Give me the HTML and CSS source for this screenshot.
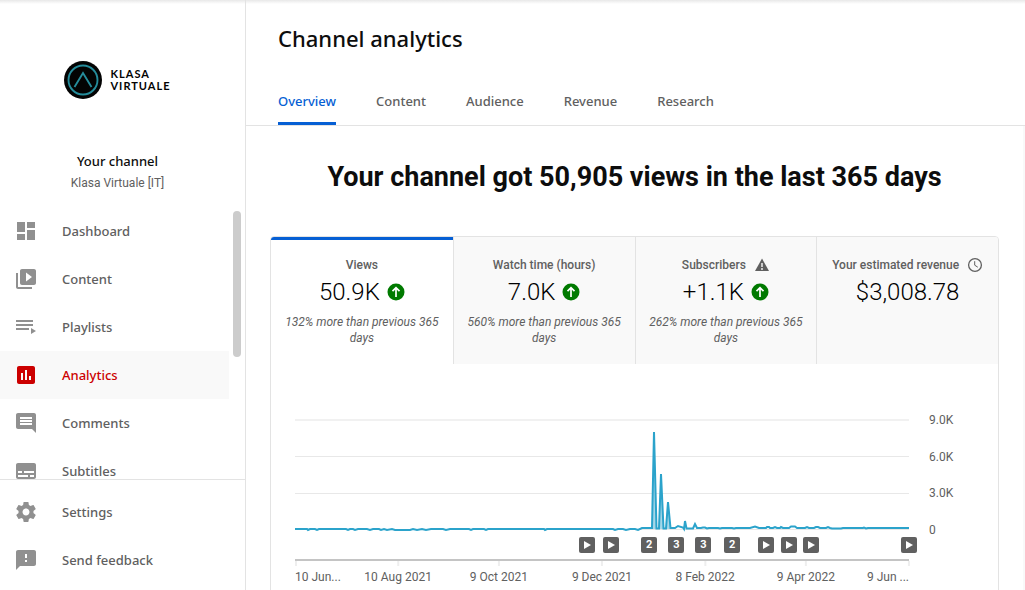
FILE: index.html
```html
<!DOCTYPE html>
<html lang="en">
<head>
<meta charset="utf-8">
<title>Channel analytics</title>
<link rel="stylesheet" href="styles.css">
</head>
<body>
<div class="app">
  <aside class="sidebar">
    <div class="profile">
      <div class="logo">
        <svg class="logo-mark" viewBox="0 0 38 38" aria-hidden="true"><circle cx="19" cy="19" r="19" fill="#030303"/><circle cx="19" cy="19" r="14.500" fill="none" stroke="#258c9b" stroke-width="1.900"/><path d="M10.500 26 19 12l8.500 14" fill="none" stroke="#258c9b" stroke-width="1.900"/></svg>
        <div class="logo-text">KLASA<br>VIRTUALE</div>
      </div>
      <div class="profile-title">Your channel</div>
      <div class="profile-name">Klasa Virtuale [IT]</div>
    </div>
    <nav class="nav-main">
      <a class="nav-item" href="#"><svg class="icon" viewBox="0 0 24 24"><path d="M3 13h8V3H3v10zm0 8h8v-6H3v6zm10 0h8V11h-8v10zm0-18v6h8V3h-8z"/></svg>Dashboard</a>
      <a class="nav-item" href="#"><svg class="icon" viewBox="0 0 24 24"><path d="M4 6H2v14c0 1.100.9 2 2 2h14v-2H4V6zm16-4H8c-1.100 0-2 .9-2 2v12c0 1.100.9 2 2 2h12c1.100 0 2-.9 2-2V4c0-1.100-.9-2-2-2zm-8 12.500v-9l6 4.500-6 4.500z"/></svg>Content</a>
      <a class="nav-item" href="#"><svg class="icon" viewBox="0 0 24 24"><path d="M2 5h17v2H2zM2 9h17v2H2zM2 13h13v2H2zM17 13l5 3-5 3z"/></svg>Playlists</a>
      <a class="nav-item active" href="#" aria-current="page"><svg class="icon" viewBox="0 0 24 24"><path d="M19 3H5c-1.100 0-2 .9-2 2v14c0 1.100.9 2 2 2h14c1.100 0 2-.9 2-2V5c0-1.100-.9-2-2-2zM9 17H7v-7h2v7zm4 0h-2V7h2v10zm4 0h-2v-4h2v4z"/></svg>Analytics</a>
      <a class="nav-item" href="#"><svg class="icon" viewBox="0 0 24 24"><path d="M21.990 4c0-1.100-.89-2-1.990-2H4c-1.100 0-2 .9-2 2v12c0 1.100.9 2 2 2h14l4 4-.01-18zM18 14H6v-2h12v2zm0-3H6V9h12v2zm0-3H6V6h12v2z"/></svg>Comments</a>
      <a class="nav-item" href="#"><svg class="icon" viewBox="0 0 24 24"><path d="M20 4H4c-1.100 0-2 .9-2 2v12c0 1.100.9 2 2 2h16c1.100 0 2-.9 2-2V6c0-1.100-.9-2-2-2zM4 12h4v2H4v-2zm10 6H4v-2h10v2zm6 0h-4v-2h4v2zm0-4H10v-2h10v2z"/></svg>Subtitles</a>
      <span class="scroll-thumb"></span>
    </nav>
    <nav class="nav-footer">
      <a class="nav-item" href="#"><svg class="icon" viewBox="0 0 24 24"><path d="M19.430 12.980c.04-.32.07-.64.07-.98s-.03-.66-.07-.98l2.110-1.650c.19-.15.24-.42.12-.64l-2-3.460c-.12-.22-.39-.3-.61-.22l-2.490 1c-.52-.4-1.080-.73-1.690-.98l-.38-2.650C14.460 2.180 14.250 2 14 2h-4c-.25 0-.46.18-.49.42l-.38 2.650c-.61.25-1.170.59-1.690.98l-2.490-1c-.23-.09-.49 0-.61.22l-2 3.460c-.13.22-.07.49.12.64l2.110 1.650c-.04.32-.07.65-.07.98s.03.66.07.98l-2.110 1.650c-.19.15-.24.42-.12.64l2 3.460c.12.22.39.3.61.22l2.490-1c.52.4 1.080.73 1.690.98l.38 2.650c.03.24.24.42.49.42h4c.25 0 .46-.18.49-.42l.38-2.650c.61-.25 1.170-.59 1.690-.98l2.490 1c.23.09.49 0 .61-.22l2-3.460c.12-.22.07-.49-.12-.64l-2.110-1.650zM12 15.500c-1.930 0-3.500-1.570-3.500-3.500s1.570-3.500 3.500-3.500 3.500 1.570 3.500 3.500-1.570 3.500-3.500 3.500z"/></svg>Settings</a>
      <a class="nav-item" href="#"><svg class="icon" viewBox="0 0 24 24"><path d="M20 2H4c-1.100 0-1.990.9-1.990 2L2 22l4-4h14c1.100 0 2-.9 2-2V4c0-1.100-.9-2-2-2zm-7 12h-2v-2h2v2zm0-4h-2V6h2v4z"/></svg>Send feedback</a>
    </nav>
  </aside>
  <main class="main">
    <header class="header">
      <h1 class="title">Channel analytics</h1>
      <nav class="tabs">
        <a class="tab selected" href="#" aria-current="page">Overview</a>
        <a class="tab" href="#">Content</a>
        <a class="tab" href="#">Audience</a>
        <a class="tab" href="#">Revenue</a>
        <a class="tab" href="#">Research</a>
      </nav>
    </header>
    <section class="content">
      <h2 class="headline">Your channel got 50,905 views in the last 365 days</h2>
      <div class="card">
        <div class="metrics">
          <button class="metric chosen" type="button">
            <span class="metric-label">Views</span>
            <span class="metric-value">50.9K <svg class="up" viewBox="0 0 18 18"><circle cx="9" cy="9" r="8.500" fill="#007a00"/><path d="M9 14V5M5.500 8.200 9 4.700l3.500 3.500" fill="none" stroke="#fff" stroke-width="1.700"/></svg></span>
            <span class="metric-note">132% more than previous 365 days</span>
          </button>
          <button class="metric" type="button">
            <span class="metric-label">Watch time (hours)</span>
            <span class="metric-value">7.0K <svg class="up" viewBox="0 0 18 18"><circle cx="9" cy="9" r="8.500" fill="#007a00"/><path d="M9 14V5M5.500 8.200 9 4.700l3.500 3.500" fill="none" stroke="#fff" stroke-width="1.700"/></svg></span>
            <span class="metric-note">560% more than previous 365 days</span>
          </button>
          <button class="metric" type="button">
            <span class="metric-label">Subscribers <svg class="hint" viewBox="0 0 16 16"><path fill="#606060" d="M8 1.500 15 14H1z"/><path d="M8 6v4M8 11v2" stroke="#f9f9f9" stroke-width="1.400"/></svg></span>
            <span class="metric-value">+1.1K <svg class="up" viewBox="0 0 18 18"><circle cx="9" cy="9" r="8.500" fill="#007a00"/><path d="M9 14V5M5.500 8.200 9 4.700l3.500 3.500" fill="none" stroke="#fff" stroke-width="1.700"/></svg></span>
            <span class="metric-note">262% more than previous 365 days</span>
          </button>
          <button class="metric" type="button">
            <span class="metric-label">Your estimated revenue <svg class="hint" viewBox="0 0 16 16" fill="none" stroke="#606060"><circle cx="8" cy="8" r="6.400" stroke-width="1.300"/><path d="M7.700 4.200V8.200L10.800 10.200"/></svg></span>
            <span class="metric-value">$3,008.78</span>
          </button>
        </div>
        <div class="chart">
          <div class="plot">
            <svg class="lines" viewBox="0 0 614 120" preserveAspectRatio="none" aria-label="Views per day">
              <path class="grid-top" d="M0 10H614"/>
              <path class="grid" d="M0 46.500H614M0 83.500H614"/>
              <path class="grid" d="M0 119.500H614"/>
              <path class="area" d="M357 119 359 22 361.500 119ZM363.500 119 366 64 369 119ZM371 119 373 92 376 119Z"/>
              <path class="series" d="M0 119H12L13 120 15 119H20L22 120 24 119H51L53 120 55 119H58L60 120 63 119H72L75 120 78 119H84L86 120 89 119 92 120 97 119 100 120H115L118 119 122 120 127 119 131 120 136 119H148L151 120 155 119H174L176 120 178 119H189L191 120 193 119H249L250 120 252 119H318L320 120 323 119H328L331 120 335 119H340L343 120 347 118H357L359 22 361.500 118.500H364L366 64 368.500 118.500H371L373 92 375.500 118H380L383 116 388 117.500 389 119 390 111 391.500 118.500H398L400 114 402 118H406L408 117.500H410L412 118.500 414 118H423L425 118.500 427 118H437L439 118.500 441 118H455L460 116.500 464 118H471L472 117H474L475 118H478L480 117 482 118H485L486 117 488 118H494L496 116.500H500L502 118H510L512 117 514 118H519L521 117H523L525 118H531L533 117 535 118 537 118.500H546L548 118H568L569 117.500 571 118.500 573 118H614"/>
            </svg>
            <div class="markers">
              <span class="marker" style="left:47.500%"><svg viewBox="0 0 16 16"><path d="M5 4l7 4-7 4z" fill="#fff"/></svg></span>
              <span class="marker" style="left:51.400%"><svg viewBox="0 0 16 16"><path d="M5 4l7 4-7 4z" fill="#fff"/></svg></span>
              <span class="marker" style="left:57.700%">2</span>
              <span class="marker" style="left:62.100%">3</span>
              <span class="marker" style="left:66.500%">3</span>
              <span class="marker" style="left:71.200%">2</span>
              <span class="marker" style="left:76.700%"><svg viewBox="0 0 16 16"><path d="M5 4l7 4-7 4z" fill="#fff"/></svg></span>
              <span class="marker" style="left:80.500%"><svg viewBox="0 0 16 16"><path d="M5 4l7 4-7 4z" fill="#fff"/></svg></span>
              <span class="marker" style="left:84.100%"><svg viewBox="0 0 16 16"><path d="M5 4l7 4-7 4z" fill="#fff"/></svg></span>
              <span class="marker" style="left:100%"><svg viewBox="0 0 16 16"><path d="M5 4l7 4-7 4z" fill="#fff"/></svg></span>
            </div>
            <div class="x-axis">
              <span class="tick first" style="left:0%">10 Jun...</span>
              <span class="tick" style="left:16.800%">10 Aug 2021</span>
              <span class="tick" style="left:33.200%">9 Oct 2021</span>
              <span class="tick" style="left:50%">9 Dec 2021</span>
              <span class="tick" style="left:66.800%">8 Feb 2022</span>
              <span class="tick" style="left:83.200%">9 Apr 2022</span>
              <span class="tick last" style="left:100%">9 Jun ...</span>
            </div>
          </div>
          <div class="y-axis"><span>9.0K</span><span>6.0K</span><span>3.0K</span><span>0</span></div>
        </div>
      </div>
    </section>
  </main>
</div>
</body>
</html>
```
FILE: styles.css
```css
* { box-sizing: border-box; }
body { margin: 0; background: #fff; color: #0d0d0d; font-family: Roboto, "Liberation Sans", sans-serif; }
a { color: inherit; text-decoration: none; }
.app { display: flex; height: 100vh; overflow: hidden; background: linear-gradient(#e8e8e8, #fff) top / 100% 4px no-repeat; }

.sidebar { display: flex; flex-direction: column; flex: none; width: 246px; border-right: 1px solid #e3e3e3; }
.profile { display: flex; flex-direction: column; align-items: center; flex: none; height: 207px; padding: 61px 10px 0 0; }
.logo { display: flex; align-items: center; gap: 8px; height: 38px; margin-bottom: 52px; }
.logo-mark { width: 38px; height: 38px; }
.logo-text { font: 700 11px/12px Lato, sans-serif; letter-spacing: 1px; color: #030303; }
.profile-title { font: 500 13px/20px "Noto Sans", sans-serif; }
.profile-name { margin-top: 4px; font-size: 12px; line-height: 16px; color: #606060; }
.nav-main { position: relative; flex: 1; min-height: 0; overflow: hidden; padding-right: 16px; }
.nav-item { display: flex; align-items: center; gap: 24px; height: 48px; padding-left: 14px; font: 500 13px/20px "Noto Sans", sans-serif; color: #606060; }
.nav-item.active { background: #f9f9f9; color: #c00; }
.icon { width: 24px; height: 24px; fill: #909090; }
.active .icon { fill: #c00; }
.scroll-thumb { position: absolute; top: 4px; right: 4px; width: 8px; height: 146px; border-radius: 4px; background: #ccc; }
.nav-footer { flex: none; padding: 8px 0 6px; border-top: 1px solid #e3e3e3; }

.main { flex: 1; min-width: 0; }
.header { padding: 21px 32px 0; border-bottom: 1px solid #e3e3e3; }
.title { margin: 0; font: 500 22px/34px "Noto Sans", sans-serif; }
.tabs { display: flex; gap: 40px; margin-top: 22px; }
.tab { height: 48px; font: 500 13px/48px "Noto Sans", sans-serif; color: #606060; }
.tab.selected { color: #065fd4; box-shadow: inset 0 -3px #065fd4; }
.content { min-height: 100%; padding: 34px 24px 0; border-right: 2px solid #f9f9f9; }
.headline { margin: 0; font-size: 27px; font-weight: 700; line-height: 34px; text-align: center; }
.card { margin-top: 42px; border: 1px solid #e3e3e3; border-radius: 4px; height: 600px; overflow: hidden; }
.metrics { display: grid; grid-template-columns: repeat(4, 1fr); }
.metric { display: flex; flex-direction: column; align-items: center; height: 127px; padding: 20px 10px 0; border: 0; border-left: 1px solid #e3e3e3; background: #f9f9f9; font-family: inherit; color: #0d0d0d; }
.metric.chosen { border-left: 0; background: #fff; box-shadow: inset 0 3px #065fd4; }
.metric-label { display: flex; align-items: center; gap: 8px; height: 16px; font-size: 12px; font-weight: 500; line-height: 16px; color: #606060; white-space: nowrap; }
.hint { width: 16px; height: 16px; }
.metric-value { display: flex; align-items: center; gap: 7px; margin-top: 3px; font-size: 24px; font-weight: 300; line-height: 32px; color: #000; }
.up { width: 18px; height: 18px; }
.metric-note { margin-top: 6px; font-size: 12px; font-style: italic; line-height: 16px; color: #606060; }

.chart { display: flex; gap: 20px; padding: 46px 24px 0; }
.plot { flex: 1; min-width: 0; }
.lines { display: block; width: 100%; height: 120px; overflow: visible; }
.lines path { fill: none; vector-effect: non-scaling-stroke; }
.lines .grid-top { stroke: #f1f1f1; stroke-width: 2; }
.lines .grid { stroke: #e8e8e8; }
.lines .area { fill: #a5d7e8; }
.lines .series { stroke: #2ba3cb; stroke-width: 2; }
.markers { position: relative; height: 29px; }
.marker { position: absolute; top: 7px; width: 16px; height: 16px; margin-left: -8px; border-radius: 2px; background: #606060; color: #fff; font-size: 11px; font-weight: 700; line-height: 16px; text-align: center; }
.marker svg { display: block; }
.x-axis { position: relative; height: 32px; border-top: 2px solid #c4c4c4; }
.tick { position: absolute; top: 8px; transform: translateX(-50%); font-size: 12px; line-height: 16px; color: #606060; white-space: nowrap; }
.tick::before { content: ""; position: absolute; top: -8px; left: 50%; width: 2px; height: 5px; margin-left: -1px; background: #eee; }
.tick.first { transform: none; }
.tick.first::before { left: 1px; }
.tick.last { transform: translateX(-100%); }
.tick.last::before { left: 100%; }
.y-axis { display: flex; flex-direction: column; justify-content: space-between; width: 45px; height: 128px; padding-top: 2px; font-size: 12px; line-height: 16px; color: #606060; }
```
